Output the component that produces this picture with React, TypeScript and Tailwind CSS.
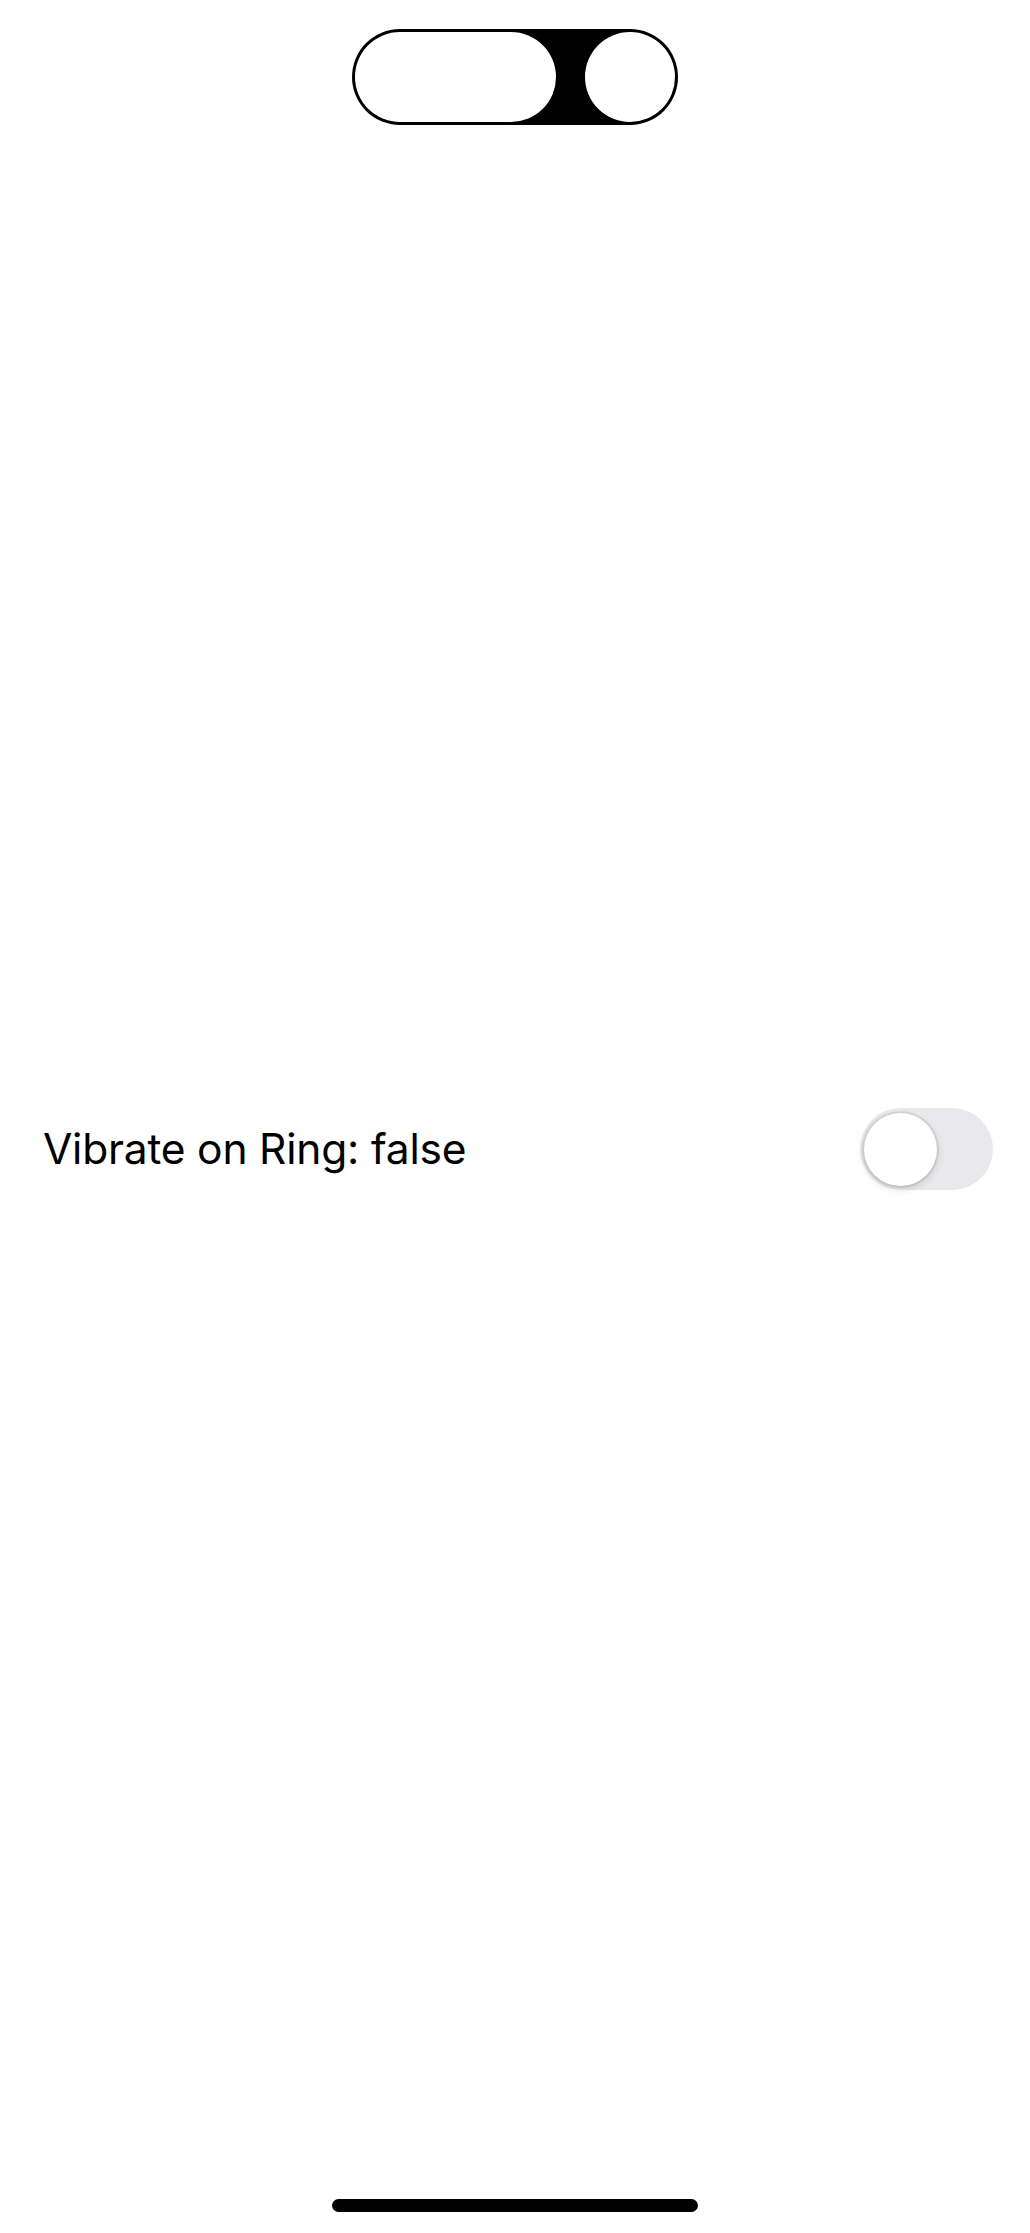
import { useState } from 'react'

export default function App() {
  const [vibrate, setVibrate] = useState(false)

  return (
    <div className="flex h-[2233px] w-full flex-col items-center bg-white font-['Inter','Liberation_Sans',sans-serif] text-black">
      {/* top pill */}
      <div className="mt-[29px] flex h-[96px] w-[326px] items-center justify-between rounded-full bg-black p-[3px]">
        <div className="h-[90px] w-[201px] rounded-full bg-white" />
        <div className="h-[90px] w-[90px] rounded-full bg-white" />
      </div>

      {/* setting row */}
      <div className="mt-[983px] flex h-[82px] w-full items-center justify-between pl-[43px] pr-[37px]">
        <span className="text-[42.5px] leading-none tracking-[-0.2px]">
          Vibrate on Ring: {vibrate ? 'true' : 'false'}
        </span>
        <button
          onClick={() => setVibrate(!vibrate)}
          className="flex h-[82px] w-[133px] items-center rounded-full bg-[#e9e9eb] px-[4px]"
        >
          <span className="h-[73px] w-[73px] rounded-full bg-white shadow-[0_3px_8px_rgba(0,0,0,0.15),0_0_0_2px_rgba(0,0,0,0.07)]" />
        </button>
      </div>

      {/* home indicator */}
      <div className="mt-[1009px] h-[13px] w-[366px] rounded-full bg-black" />
    </div>
  )
}
